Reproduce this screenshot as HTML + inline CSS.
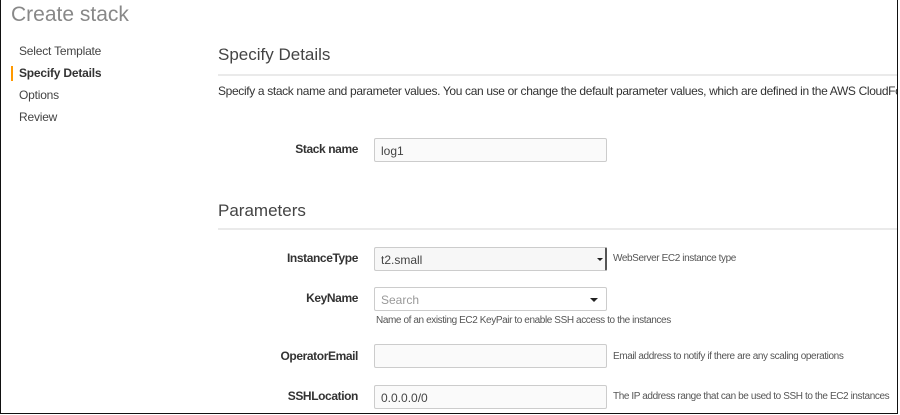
<!DOCTYPE html>
<html><head><style>
*{margin:0;padding:0;box-sizing:border-box}
body{width:900px;height:415px;background:#fff;font-family:"Liberation Sans",sans-serif;color:#333;position:relative;overflow:hidden}
.frame{position:absolute;left:0;top:0;width:898px;height:414px;border:1px solid #111;border-top:none;overflow:hidden}
.a{position:absolute;white-space:nowrap}
.title{left:10px;top:3px;font-size:21px;color:#888}
.nav{left:18px;font-size:12px;color:#444;letter-spacing:-0.2px}
.h{left:217px;font-size:17px;color:#444}
.line{position:absolute;left:217px;right:0;height:2px;background:#eaeaea}
.lbl{font-size:12px;font-weight:bold;color:#333;text-align:right;width:150px;left:207px;letter-spacing:-0.4px}
.inp{position:absolute;left:373px;width:233px;height:24px;border:1px solid #ccc;border-radius:2px;background:#fafafa;font-size:12px;color:#444;padding:5px 6px}
.help{font-size:10px;color:#555;letter-spacing:-0.4px}
</style></head><body><div class="frame">
<div class="a title">Create stack</div>
<div style="position:absolute;left:10px;top:66px;width:2px;height:15px;background:#f90"></div>
<div class="a nav" style="top:44px">Select Template</div>
<div class="a nav" style="top:66px;font-weight:bold;color:#333">Specify Details</div>
<div class="a nav" style="top:88px">Options</div>
<div class="a nav" style="top:110px">Review</div>
<div class="a h" style="top:45px">Specify Details</div>
<div class="line" style="top:74px"></div>
<div class="a" style="left:217px;top:84px;font-size:12px;color:#333;letter-spacing:-0.35px">Specify a stack name and parameter values. You can use or change the default parameter values, which are defined in the AWS CloudFormation template.</div>
<div class="a lbl" style="top:142px">Stack name</div>
<div class="inp" style="top:138px">log1</div>
<div class="a h" style="top:201px">Parameters</div>
<div class="line" style="top:228px"></div>
<div class="a lbl" style="top:251px">InstanceType</div>
<div class="inp" style="top:247px;background:#f7f7f7;border-right:2px solid #555">t2.small<span style="position:absolute;right:2px;top:10px;border:3px solid transparent;border-top:3px solid #222"></span></div>
<div class="a help" style="left:612px;top:253px">WebServer EC2 instance type</div>
<div class="a lbl" style="top:291px">KeyName</div>
<div class="inp" style="top:287px;background:#fff;color:#999">Search<span style="position:absolute;right:8px;top:10px;border:4px solid transparent;border-top:4px solid #222"></span></div>
<div class="a help" style="left:375px;top:315px">Name of an existing EC2 KeyPair to enable SSH access to the instances</div>
<div class="a lbl" style="top:349px">OperatorEmail</div>
<div class="inp" style="top:344px"></div>
<div class="a help" style="left:612px;top:351px">Email address to notify if there are any scaling operations</div>
<div class="a lbl" style="top:389px">SSHLocation</div>
<div class="inp" style="top:385px">0.0.0.0/0</div>
<div class="a help" style="left:612px;top:391px">The IP address range that can be used to SSH to the EC2 instances</div>
</div></body></html>
